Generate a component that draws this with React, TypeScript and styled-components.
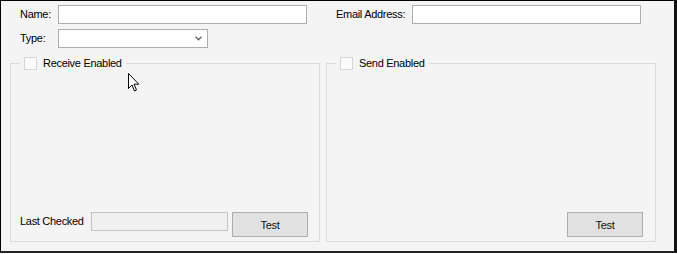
import React from 'react';
import styled, { createGlobalStyle } from 'styled-components';

const GlobalStyle = createGlobalStyle`
  html, body {
    margin: 0;
    padding: 0;
    background: #ffffff;
  }
  body {
    font-family: 'Liberation Sans', Arial, sans-serif;
    font-size: 11px;
    letter-spacing: -0.3px;
    color: #000;
  }
`;

const Window = styled.div`
  position: relative;
  box-sizing: border-box;
  width: 677px;
  height: 253px;
  background: #f4f4f4;
  border-top: 1px solid #000;
  border-left: 1px solid #000;
  border-right: 3px solid #111;
  border-bottom: 2px solid #222;
  padding: 4px 0 0 0;
  display: flex;
  flex-direction: column;
`;

const Row = styled.div<{ $mt?: number }>`
  display: flex;
  align-items: center;
  height: 19px;
  margin-top: ${(p) => p.$mt ?? 0}px;
  padding-left: 19px;
`;

const Label = styled.span<{ $w: number }>`
  width: ${(p) => p.$w}px;
  flex: 0 0 ${(p) => p.$w}px;
  line-height: 19px;
  white-space: nowrap;
`;

const TextBox = styled.div<{ $w: number; $disabled?: boolean }>`
  box-sizing: border-box;
  width: ${(p) => p.$w}px;
  height: 19px;
  background: ${(p) => (p.$disabled ? '#f0f0f0' : '#fff')};
  border: 1px solid ${(p) => (p.$disabled ? '#c4c4c4' : '#aeaeae')};
`;

const Spacer = styled.div<{ $w: number }>`
  width: ${(p) => p.$w}px;
  flex: 0 0 ${(p) => p.$w}px;
`;

const Select = styled.div`
  box-sizing: border-box;
  width: 150px;
  height: 19px;
  background: #fff;
  border: 1px solid #aeaeae;
  display: flex;
  align-items: center;
  justify-content: flex-end;
  padding-right: 5px;
`;

const Groups = styled.div`
  display: flex;
  gap: 6px;
  margin-top: 9px;
  padding-left: 9px;
`;

const Group = styled.fieldset<{ $w: number; $pr: number }>`
  box-sizing: border-box;
  width: ${(p) => p.$w}px;
  height: 185px;
  margin: 0;
  padding: 0 ${(p) => p.$pr}px 4px 9px;
  border: 1px solid #dcdcdc;
  display: flex;
  flex-direction: column;
  justify-content: flex-end;
`;

const Legend = styled.legend`
  display: flex;
  align-items: center;
  margin: 0;
  padding: 0 4px;
  height: 13px;
  line-height: 13px;
  gap: 6px;
`;

const Check = styled.span`
  box-sizing: border-box;
  width: 13px;
  height: 13px;
  background: #fbfbfb;
  border: 1px solid #d6d6d6;
`;

const Bottom = styled.div<{ $end?: boolean }>`
  display: flex;
  align-items: flex-start;
  justify-content: ${(p) => (p.$end ? 'flex-end' : 'flex-start')};
  gap: 4px;
`;

const Button = styled.button`
  box-sizing: border-box;
  width: 76px;
  height: 25px;
  background: #e1e1e1;
  border: 1px solid #adadad;
  border-radius: 0;
  font-family: inherit;
  font-size: 11px;
  letter-spacing: -0.3px;
  color: #111;
  padding: 0;
`;

const Cursor = styled.svg`
  position: absolute;
  left: 126px;
  top: 71px;
`;

export default function App() {
  return (
    <>
      <GlobalStyle />
      <Window>
        <Row>
          <Label $w={38}>Name:</Label>
          <TextBox $w={249} />
          <Spacer $w={29} />
          <Label $w={76}>Email Address:</Label>
          <TextBox $w={229} />
        </Row>
        <Row $mt={5}>
          <Label $w={38}>Type:</Label>
          <Select>
            <svg width="7" height="5" viewBox="0 0 7 5">
              <path d="M0.5 0.8 L3.5 3.8 L6.5 0.8" fill="none" stroke="#606060" strokeWidth="1.3" />
            </svg>
          </Select>
        </Row>
        <Groups>
          <Group $w={310} $pr={11}>
            <Legend>
              <Check />
              Receive Enabled
            </Legend>
            <Bottom>
              <Label $w={67}>Last Checked</Label>
              <TextBox $w={137} $disabled />
              <Button>Test</Button>
            </Bottom>
          </Group>
          <Group $w={330} $pr={12}>
            <Legend>
              <Check />
              Send Enabled
            </Legend>
            <Bottom $end>
              <Button>Test</Button>
            </Bottom>
          </Group>
        </Groups>
        <Cursor width="13" height="21" viewBox="0 0 13 21">
          <path
            d="M1.5 1.5 L1.5 16.5 L5 13 L7.5 19 L9.5 18 L7 12.2 L11.8 12.2 Z"
            fill="#fff"
            stroke="#000"
            strokeWidth="1"
            strokeLinejoin="miter"
          />
        </Cursor>
      </Window>
    </>
  );
}
